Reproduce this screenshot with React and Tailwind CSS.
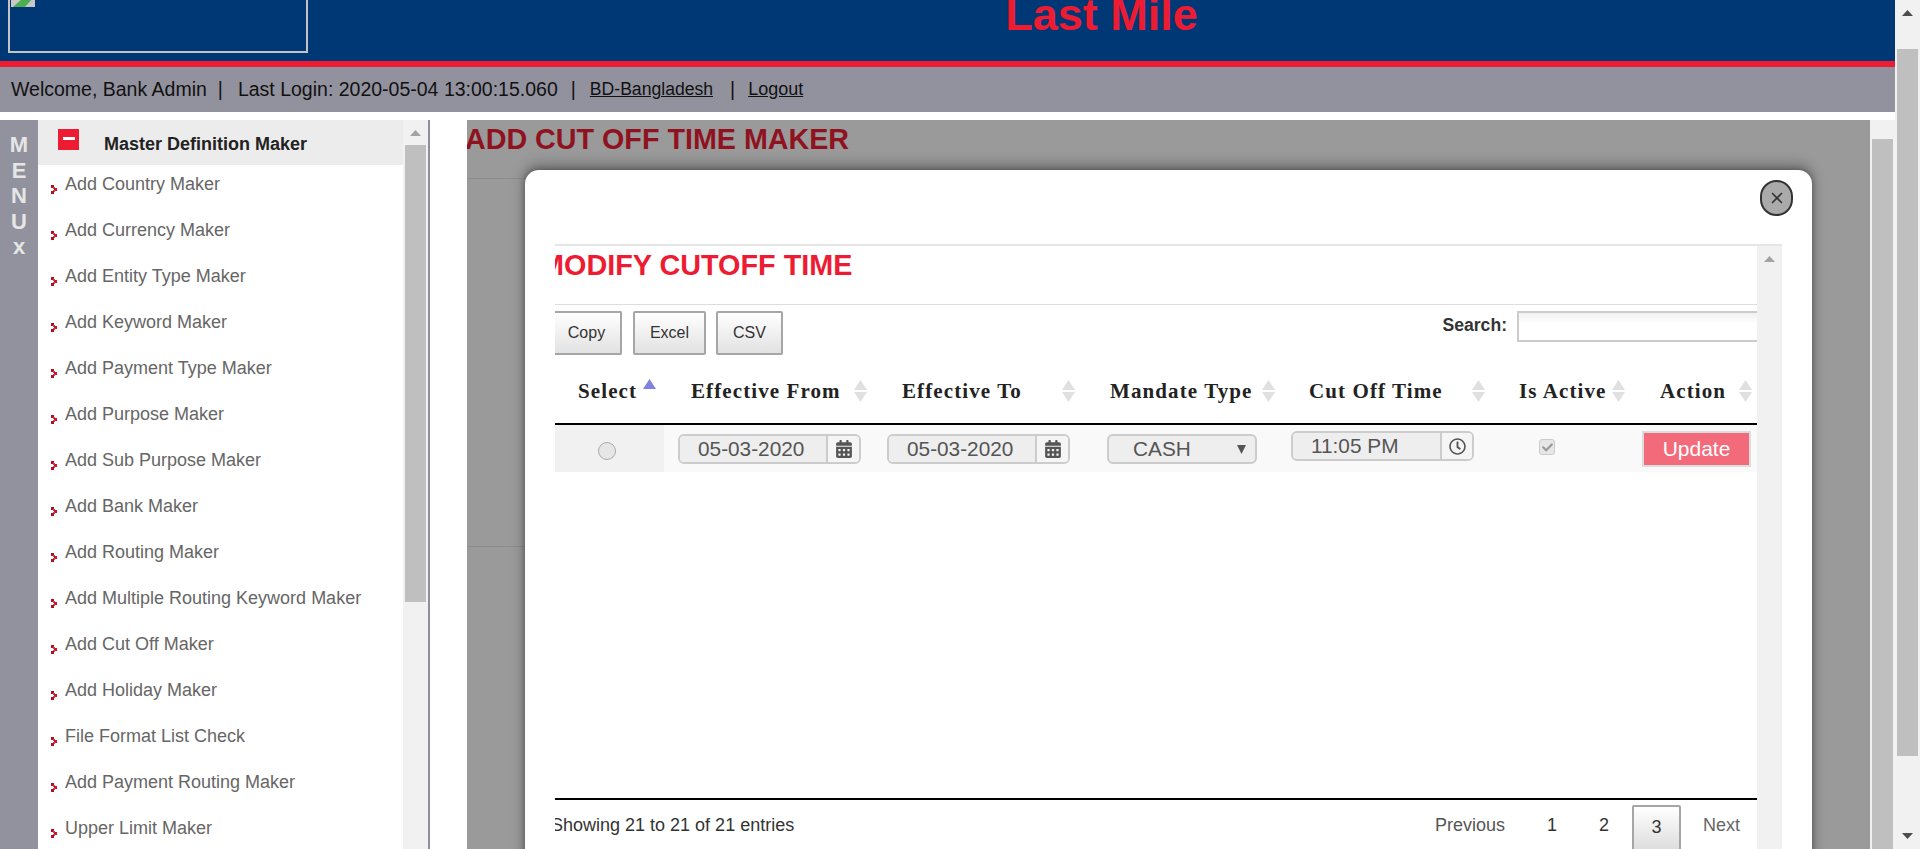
import { FaCalendarAlt, FaRegClock, FaCheck } from "react-icons/fa";
import { X } from "lucide-react";

const menuItems = [
    "Add Country Maker",
    "Add Currency Maker",
    "Add Entity Type Maker",
    "Add Keyword Maker",
    "Add Payment Type Maker",
    "Add Purpose Maker",
    "Add Sub Purpose Maker",
    "Add Bank Maker",
    "Add Routing Maker",
    "Add Multiple Routing Keyword Maker",
    "Add Cut Off Maker",
    "Add Holiday Maker",
    "File Format List Check",
    "Add Payment Routing Maker",
    "Upper Limit Maker",
];

const columns = [
    { label: "Select", cls: "w-[109px] pl-[23px] pr-[8px]", active: true },
    { label: "Effective From", cls: "w-[209px] pl-[27px] pr-[6px]" },
    { label: "Effective To", cls: "w-[220px] pl-[29px] pr-[18px]" },
    { label: "Mandate Type", cls: "w-[184px] pl-[17px] pr-[2px]" },
    { label: "Cut Off Time", cls: "w-[218px] pl-[32px] pr-[10px]" },
    { label: "Is Active", cls: "w-[137px] pl-[24px] pr-[7px]" },
    { label: "Action", cls: "w-[125px] pl-[28px] pr-[5px]" },
];

const Triangle = ({ down = false, className = "" }) => (
    <svg width="11" height="6" viewBox="0 0 11 6" className={className}>
        <polygon points={down ? "0,0 11,0 5.5,6" : "5.5,0 11,6 0,6"} fill="currentColor" />
    </svg>
);

const Scrollbar = ({ thumb = "", arrow = "text-[#a3a3a3]", downArrow = false }) => (
    <div className="relative w-[25px] shrink-0 h-full bg-[#f1f1f1] flex flex-col items-center overflow-hidden">
        <Triangle className={`mt-[10px] ${arrow}`} />
        {thumb && <div className={`w-[21px] shrink-0 bg-[#bfbfbf] ${thumb}`} />}
        {downArrow && <Triangle down className={`absolute bottom-[10px] ${arrow}`} />}
    </div>
);

const SortIcon = ({ active }) =>
    active ? (
        <svg width="13" height="22" viewBox="0 0 13 22" className="shrink-0 -mt-[3px]">
            <polygon points="6.5,0 13,10 0,10" fill="#7f82e0" />
        </svg>
    ) : (
        <svg width="13" height="22" viewBox="0 0 13 22" className="shrink-0">
            <polygon points="6.5,0 13,10 0,10" fill="#e0e0e0" />
            <polygon points="0,12 13,12 6.5,22" fill="#e0e0e0" />
        </svg>
    );

// small pixel arrow in front of each menu entry
const Chevron = () => (
    <svg width="6" height="9" viewBox="0 0 6 9" className="shrink-0 mt-[12px]">
        <rect x="0" y="0" width="3" height="3" fill="#b01020" />
        <rect x="2" y="2" width="2" height="2" fill="#e04050" />
        <rect x="3" y="3" width="3" height="3" fill="#d8102a" />
        <rect x="2" y="5" width="2" height="2" fill="#e04050" />
        <rect x="0" y="6" width="3" height="3" fill="#b01020" />
    </svg>
);

const DateField = () => (
    <div className="mt-[9px] w-[183px] h-[30px] flex rounded-[6px] border-2 border-[#cccccc] overflow-hidden text-[#555] text-[20.8px] leading-[26px]">
        <div className="w-[146px] bg-[#eeeeee] pl-[18px]">05-03-2020</div>
        <div className="flex-1 border-l-2 border-[#cccccc] bg-[#f5f5f5] flex items-center justify-center">
            <FaCalendarAlt className="text-[18px] text-[#555]" />
        </div>
    </div>
);

const Header = () => (
    <header className="shrink-0">
        <div className="h-[61px] bg-[#003876] flex overflow-hidden">
            <div className="w-[300px] h-[60px] ml-[8px] -mt-[7px] border-2 border-[#c4c4c4] shrink-0 pl-[1px] pt-[1px]">
                <svg width="24" height="11" viewBox="0 0 24 11">
                    <rect width="24" height="11" fill="#c8c8c8" />
                    <polygon points="2,11 14,11 22,2 12,2" fill="#4caf50" />
                </svg>
            </div>
            <h1 className="flex-1 text-center text-[45px] leading-[44px] font-bold text-[#ed1c33] -mt-[7px]">Last Mile</h1>
        </div>
        <div className="h-[6px] bg-[#ed1c33]" />
        <div className="h-[45px] bg-[#92929e] flex items-center pl-[11px] text-[19.5px] text-[#111]">
            <span>Welcome, Bank Admin</span>
            <span className="ml-[11px]">|</span>
            <span className="ml-[15px]">Last Login: 2020-05-04 13:00:15.060</span>
            <span className="ml-[13px]">|</span>
            <a className="ml-[14px] text-[17.6px] underline">BD-Bangladesh</a>
            <span className="ml-[17px]">|</span>
            <a className="ml-[13px] text-[18px] underline">Logout</a>
        </div>
        <div className="h-[8px] bg-white" />
    </header>
);

const Sidebar = () => (
    <>
        <div className="w-[38px] shrink-0 bg-[#92929e] pt-[12px] flex flex-col items-center text-[22px] leading-[25.5px] font-bold text-[#e6e6e6]">
            {["M", "E", "N", "U", "x"].map((letter) => (
                <span key={letter}>{letter}</span>
            ))}
        </div>
        <aside className="w-[365px] shrink-0 bg-white overflow-hidden">
            <div className="h-[45px] bg-[#ececec] flex items-start pl-[20px]">
                <div className="w-[21px] h-[21px] mt-[9px] bg-[#ed1c33] flex items-center justify-center">
                    <div className="w-[12px] h-[3px] -mt-[3px] bg-white" />
                </div>
                <div className="ml-[25px] mt-[13px] text-[18px] leading-[22px] font-bold text-[#222]">Master Definition Maker</div>
            </div>
            <ul className="pt-[8px] pl-[13px]">
                {menuItems.map((item) => (
                    <li key={item} className="h-[46px] flex items-start gap-[8px] text-[18px] leading-[22px] text-[#666]">
                        <Chevron />
                        <span>{item}</span>
                    </li>
                ))}
            </ul>
        </aside>
        <Scrollbar thumb="mt-[9px] h-[457px]" />
        <div className="w-[2px] shrink-0 bg-[#8e8ea0]" />
        <div className="w-[37px] shrink-0 bg-white" />
    </>
);

const DataTable = () => (
    <div className="h-[445px] border-b-2 border-black">
        <table className="table-fixed border-separate border-spacing-0 w-[1202px]">
            <thead>
                <tr>
                    {columns.map((col) => (
                        <th key={col.label} className={`h-[70px] pt-[4px] border-b-2 border-black font-normal ${col.cls}`}>
                            <div className="flex justify-between items-center font-['Liberation_Serif',serif] font-bold text-[21px] leading-[24px] tracking-[1.1px] text-[#222] whitespace-nowrap">
                                <span>{col.label}</span>
                                <SortIcon active={col.active} />
                            </div>
                        </th>
                    ))}
                </tr>
            </thead>
            <tbody>
                <tr className="bg-[#f9f9f9] h-[47px]">
                    <td className="bg-[#f1f1f1] align-top">
                        <div className="mt-[17px] ml-[43px] w-[18px] h-[18px] rounded-full border border-[#aaaaaa] bg-[#e6e6e6]" />
                    </td>
                    <td className="align-top pl-[14px]">
                        <DateField />
                    </td>
                    <td className="align-top pl-[14px]">
                        <DateField />
                    </td>
                    <td className="align-top pl-[14px]">
                        <div className="mt-[9px] w-[150px] h-[30px] flex items-center rounded-[6px] border-2 border-[#cccccc] bg-[#eeeeee] text-[#555] text-[20.8px] pl-[24px] pr-[9px] justify-between">
                            <span>CASH</span>
                            <svg width="9" height="9" viewBox="0 0 9 9">
                                <polygon points="0,0 9,0 4.5,9" fill="#555" />
                            </svg>
                        </div>
                    </td>
                    <td className="align-top pl-[14px]">
                        <div className="mt-[6px] w-[183px] h-[30px] flex rounded-[6px] border-2 border-[#cccccc] overflow-hidden text-[#555] text-[20.8px] leading-[26px]">
                            <div className="w-[147px] bg-[#eeeeee] pl-[18px]">11:05 PM</div>
                            <div className="flex-1 border-l-2 border-[#cccccc] bg-[#f5f5f5] flex items-center justify-center">
                                <FaRegClock className="text-[17px] text-[#555]" />
                            </div>
                        </div>
                    </td>
                    <td className="align-top pl-[44px]">
                        <div className="mt-[14px] w-[16px] h-[16px] rounded-[3px] border border-[#cccccc] bg-[#e6e6e6] flex items-center justify-center">
                            <FaCheck className="text-[11px] text-[#999]" />
                        </div>
                    </td>
                    <td className="align-top pl-[10px]">
                        <button className="mt-[6px] w-[109px] h-[36px] border-2 border-[#dddddd] bg-[#f36b7b] text-white text-[21px] leading-[30px]">Update</button>
                    </td>
                </tr>
            </tbody>
        </table>
    </div>
);

const ToolButton = ({ className = "", children }) => (
    <button className={`h-[44px] border-2 border-[#a6a6a6] rounded-[2px] bg-gradient-to-b from-white to-[#e2e2e2] text-[16px] text-[#333] ${className}`}>
        {children}
    </button>
);

const Modal = () => (
    <div className="absolute left-[58px] top-[50px] w-[1287px] h-[760px] bg-white rounded-[14px] shadow-[0_-5px_14px_rgba(0,0,0,0.3),0_0_6px_rgba(0,0,0,0.35)] px-[30px] pt-[74px]">
        <button className="absolute right-[19px] top-[10px] w-[33px] h-[36px] rounded-full border-2 border-[#333] bg-[#aaaaaa] flex items-center justify-center">
            <X size={18} strokeWidth={2.2} className="text-[#333]" />
        </button>
        <div className="h-full border-t-2 border-[#e5e5e5] flex">
            <div className="flex-1 min-w-0 overflow-hidden">
                <div className="h-[59px] border-b border-[#dddddd]">
                    <h2 className="-ml-[15px] text-[28.8px] leading-[38px] font-bold text-[#ed1c33] whitespace-nowrap">MODIFY CUTOFF TIME</h2>
                </div>
                <div className="h-[50px] pt-[6px] flex items-start justify-between">
                    <div className="flex -ml-[4px] gap-[11px]">
                        <ToolButton className="w-[71px] border-l-0 pl-[2px]">Copy</ToolButton>
                        <ToolButton className="w-[73px]">Excel</ToolButton>
                        <ToolButton className="w-[67px] -ml-px">CSV</ToolButton>
                    </div>
                    <div className="flex items-start">
                        <label className="text-[17.6px] leading-[28px] font-bold text-[#333]">Search:</label>
                        <div className="ml-[10px] w-[240px] h-[31px] border-2 border-r-0 border-[#cccccc] bg-gradient-to-b from-[#f1f1f1] to-white to-40%" />
                    </div>
                </div>
                <DataTable />
                <div className="flex justify-between items-start">
                    <div className="-ml-[4px] mt-[14px] text-[18px] leading-[22px] text-[#333]">Showing 21 to 21 of 21 entries</div>
                    <div className="flex items-start mt-[5px] text-[18px] text-[#333] pr-[17px]">
                        <span className="mt-[9px] leading-[22px] text-[#555]">Previous</span>
                        <span className="mt-[9px] leading-[22px] ml-[42px]">1</span>
                        <span className="mt-[9px] leading-[22px] ml-[42px]">2</span>
                        <span className="ml-[23px] w-[49px] h-[48px] border-2 border-[#a6a6a6] rounded-[2px] bg-gradient-to-b from-white to-[#dcdcdc] text-center leading-[40px]">3</span>
                        <span className="mt-[9px] leading-[22px] ml-[22px] text-[#666]">Next</span>
                    </div>
                </div>
            </div>
            <Scrollbar />
        </div>
    </div>
);

const App = () => (
    <div className="flex h-screen overflow-hidden bg-white font-['Liberation_Sans',Arial,sans-serif]">
        <div className="flex-1 min-w-0 flex flex-col">
            <Header />
            <div className="flex-1 min-h-0 flex">
                <Sidebar />
                <main className="relative flex-1 min-w-0 bg-[#9a9a9a] overflow-hidden">
                    <div className="w-[500px] h-[59px] border-b border-[#8c8c8c]">
                        <h1 className="-ml-[2px] pt-[1px] text-[28.7px] leading-[36px] font-bold text-[#8f1220] whitespace-nowrap">ADD CUT OFF TIME MAKER</h1>
                    </div>
                    <div className="w-[500px] h-[368px] border-b border-[#8c8c8c]" />
                    <Modal />
                </main>
                <Scrollbar thumb="mt-[9px] h-[800px]" />
            </div>
        </div>
        <Scrollbar thumb="mt-[33px] h-[707px]" arrow="text-[#4d4d4d]" downArrow />
    </div>
);

export default App;
